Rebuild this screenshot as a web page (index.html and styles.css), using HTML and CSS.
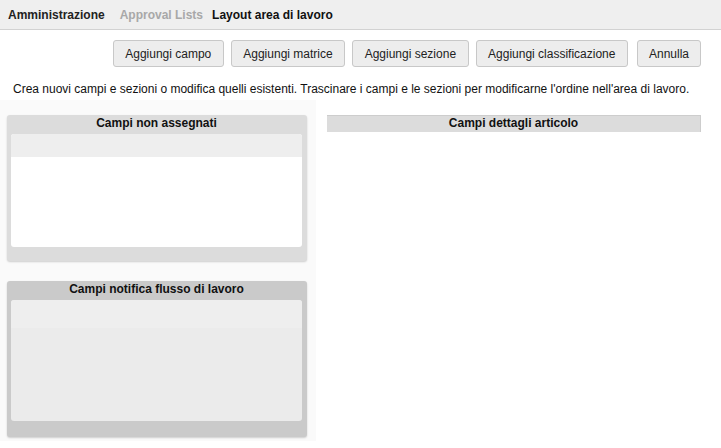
FILE: index.html
```html
<!DOCTYPE html>
<html lang="it">
<head>
<meta charset="utf-8">
<title>Layout area di lavoro</title>
<link rel="stylesheet" href="styles.css">
</head>
<body>
<div class="topbar">
  <span class="crumb crumb-strong">Amministrazione</span>
  <span class="crumb crumb-muted">Approval Lists</span>
  <span class="crumb crumb-current">Layout area di lavoro</span>
</div>
<div class="toolbar">
  <button class="btn">Aggiungi campo</button>
  <button class="btn">Aggiungi matrice</button>
  <button class="btn">Aggiungi sezione</button>
  <button class="btn">Aggiungi classificazione</button>
  <button class="btn btn-cancel">Annulla</button>
</div>
<p class="desc">Crea nuovi campi e sezioni o modifica quelli esistenti. Trascinare i campi e le sezioni per modificarne l'ordine nell'area di lavoro.</p>
<div class="workspace">
  <div class="left-col">
    <div class="panel panel-unassigned">
      <div class="panel-title">Campi non assegnati</div>
      <div class="panel-body">
        <div class="panel-band"></div>
      </div>
    </div>
    <div class="panel panel-workflow">
      <div class="panel-title">Campi notifica flusso di lavoro</div>
      <div class="panel-body">
        <div class="panel-band"></div>
      </div>
    </div>
  </div>
  <div class="right-col">
    <div class="details-header">Campi dettagli articolo</div>
  </div>
</div>
</body>
</html>
```
FILE: styles.css
```css
html, body {
  margin: 0;
  padding: 0;
}
body {
  font-family: "Liberation Sans", Arial, sans-serif;
  font-size: 12px;
  color: #1a1a1a;
  background: #ffffff;
  width: 721px;
  height: 448px;
  overflow: hidden;
}
.topbar {
  height: 29px;
  background: #efefef;
  border-bottom: 1px solid #d2d2d2;
  display: flex;
  align-items: center;
  padding-left: 8px;
  font-weight: bold;
  font-size: 12px;
}
.crumb-strong { color: #222; margin-right: 15px; }
.crumb-muted { color: #a8a8a8; margin-right: 9px; }
.crumb-current { color: #111; }
.toolbar {
  display: flex;
  justify-content: flex-end;
  gap: 7px;
  padding: 10px 20px 0 0;
}
.btn {
  font-family: "Liberation Sans", Arial, sans-serif;
  font-size: 12px;
  color: #222;
  height: 27px;
  padding: 0 11.5px;
  background: #ededed;
  border: 1px solid #c8c8c8;
  border-radius: 3px;
  margin: 0;
}
.btn-cancel { padding: 0 11px; margin-left: 2px; }
.desc {
  margin: 14px 0 0 13px;
  line-height: 16px;
  color: #111;
}
.workspace {
  display: flex;
  margin-top: 3px;
  background: #fafafa;
  height: 341px;
}
.left-col {
  width: 300px;
  margin-left: 7px;
  padding-top: 15px;
  display: flex;
  flex-direction: column;
  gap: 20px;
}
.panel {
  border-radius: 3px;
  box-shadow: 0 1px 2px rgba(0, 0, 0, 0.18);
  padding: 0 5px 0 4px;
}
.panel-title {
  height: 19px;
  line-height: 17px;
  text-align: center;
  font-weight: bold;
  color: #111;
}
.panel-body {
  border-radius: 3px;
  overflow: hidden;
}
.panel-unassigned {
  background: #dcdcdc;
  height: 146px;
}
.panel-unassigned .panel-body {
  background: #ffffff;
  height: 113px;
}
.panel-unassigned .panel-band {
  height: 23px;
  background: #eeeeee;
}
.panel-workflow {
  background: #cacaca;
  height: 156px;
}
.panel-workflow .panel-body {
  background: #ebebeb;
  height: 121px;
}
.panel-workflow .panel-band {
  height: 28px;
  background: #eeeeee;
}
.right-col {
  flex: 1;
  margin-left: 9px;
  background: #ffffff;
  padding: 15px 20px 0 11px;
}
.details-header {
  height: 17px;
  line-height: 15px;
  background: #dcdcdc;
  border-top: 1px solid #cdcdcd;
  border-right: 1px solid #cdcdcd;
  box-sizing: border-box;
  text-align: center;
  font-weight: bold;
  color: #111;
}
```
